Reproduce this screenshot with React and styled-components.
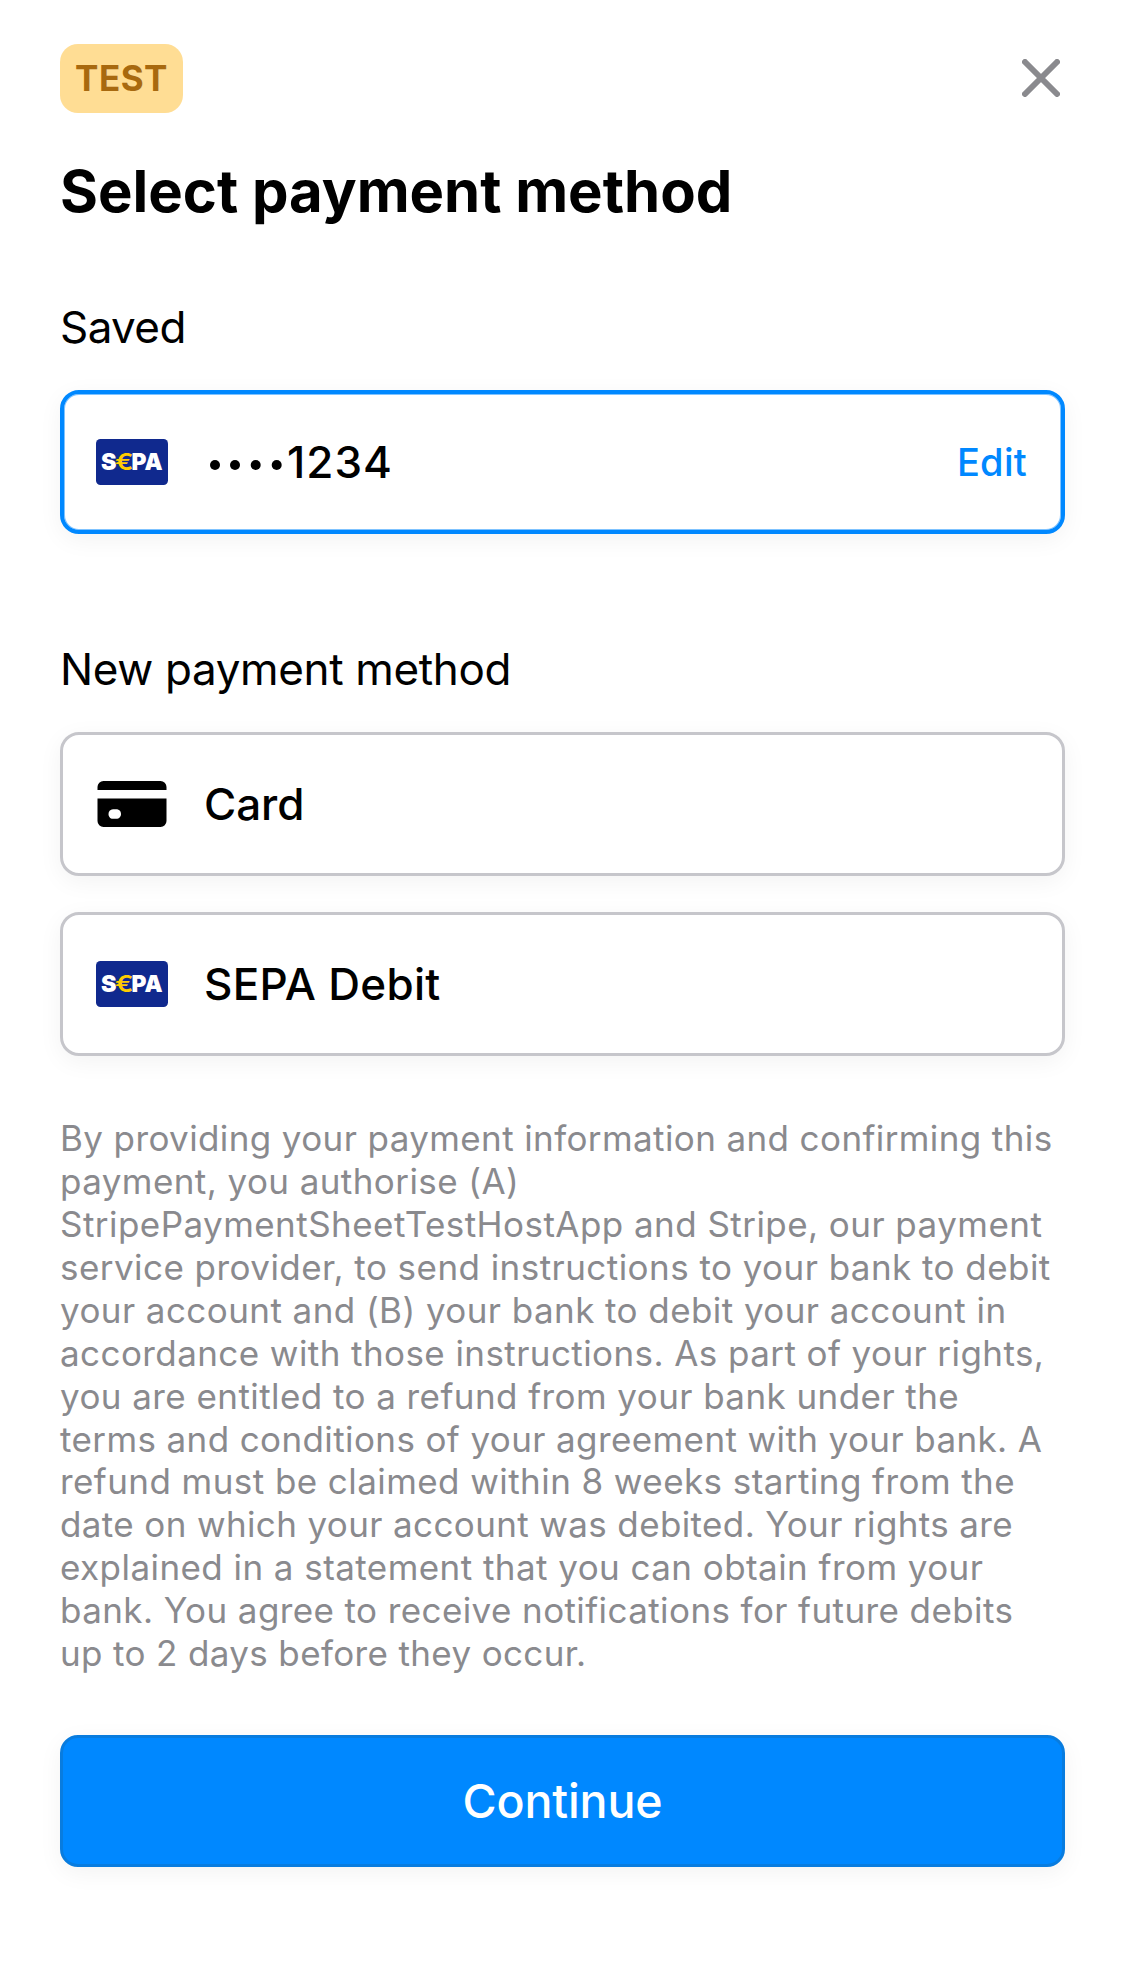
import React from "react";
import styled, { createGlobalStyle } from "styled-components";

const Global = createGlobalStyle`
  * { box-sizing: border-box; }
  body { margin: 0; background: #fff; }
`;

const Sheet = styled.main`
  width: 1125px;
  height: 1987px;
  padding: 44px 60px 0;
  display: flex;
  flex-direction: column;
  background: #fff;
  color: #000;
  font-family: Inter, "Liberation Sans", sans-serif;
  overflow: hidden;
`;

const TopBar = styled.header`
  display: flex;
  justify-content: space-between;
  align-items: center;
  height: 69px;
`;

const TestBadge = styled.span`
  display: flex;
  align-items: center;
  justify-content: center;
  width: 123px;
  height: 69px;
  padding-bottom: 1px;
  border-radius: 18px;
  background: #ffdd94;
  color: #a8690f;
  font-size: 35px;
  font-weight: 700;
  letter-spacing: 0.5px;
  line-height: 1;
`;

const CloseButton = styled.button`
  display: flex;
  margin: 0 5px 1px 0;
  padding: 0;
  border: 0;
  background: none;
`;

const Title = styled.h1`
  margin: 42px 0 0;
  height: 73px;
  font-size: 58px;
  line-height: 72px;
  font-weight: 700;
  white-space: nowrap;
`;

const SectionLabel = styled.h2`
  margin: ${(p) => p.$top}px 0 0;
  height: 54px;
  font-size: 44px;
  line-height: 54px;
  font-weight: 400;
  letter-spacing: ${(p) => p.$tracking}px;
  white-space: nowrap;
`;

const MethodRow = styled.div`
  display: flex;
  align-items: center;
  flex: none;
  height: 144px;
  margin-top: ${(p) => p.$top}px;
  padding-left: ${(p) => (p.$selected ? 32 : 33)}px;
  padding-right: 34px;
  border: ${(p) => (p.$selected ? "4px solid #0088ff" : "3px solid #c6c6cb")};
  border-radius: 19px;
  background: #fff;
  box-shadow: ${(p) => (p.$selected ? "inset 0 0 0 1px rgba(0, 136, 255, 0.5), " : "")}0 6px 24px rgba(0, 0, 0, 0.05);
`;

const MethodName = styled.span`
  display: flex;
  align-items: center;
  margin-left: 36px;
  font-size: 44px;
  line-height: 54px;
  font-weight: 500;
  letter-spacing: ${(p) => p.$tracking}px;
  white-space: nowrap;
`;

const EditButton = styled.button`
  margin-left: auto;
  padding: 0;
  border: 0;
  background: none;
  color: #0088ff;
  font-family: inherit;
  font-size: 38px;
  line-height: 48px;
  font-weight: 500;
  letter-spacing: 0.3px;
`;

const Mandate = styled.p`
  margin: 60.85px 0 0;
  color: #8a8a8e;
  font-size: 35px;
  line-height: 42.96px;
  font-weight: 400;
`;

const MandateLine = styled.span`
  display: block;
  white-space: nowrap;
  letter-spacing: ${(p) => p.$tracking}px;
`;

const ContinueButton = styled.button`
  flex: none;
  height: 132px;
  margin: 59.65px 0 0;
  padding: 0;
  border: 3px solid #087cdf;
  border-radius: 18px;
  background: #0088ff;
  box-shadow: 0 6px 24px rgba(0, 0, 0, 0.05);
  color: #fff;
  font-family: inherit;
  font-size: 46.5px;
  line-height: 58px;
  font-weight: 500;
  letter-spacing: -0.1px;
`;

const SepaLogo = () => (
  <svg width="72" height="46" viewBox="0 0 72 46">
    <rect width="72" height="46" rx="4.5" fill="#10298e" />
    <g fontFamily='Inter, "Liberation Sans", sans-serif' fontWeight="900" fontSize="23.2" fill="#fff">
      <text x="5" y="31.300" textLength="15.5" lengthAdjust="spacingAndGlyphs">S</text>
      <text x="35.500" y="31.300" textLength="31" lengthAdjust="spacingAndGlyphs">PA</text>
      <text x="19" y="31.300" textLength="18.5" lengthAdjust="spacingAndGlyphs" fill="#ffcc00" fontWeight="600">€</text>
    </g>
  </svg>
);

const CardIcon = () => (
  <svg width="72" height="46" viewBox="0 0 72 46">
    <path d="M1.5 9V6a6 6 0 0 1 6-6h57a6 6 0 0 1 6 6v3z" />
    <path
      fillRule="evenodd"
      d="M1.500 17.500H70.500V40a6 6 0 0 1-6 6h-57a6 6 0 0 1-6-6zM17 28.200h3c3.500 0 5 2.200 5 4.700s-1.500 4.800-5 4.800h-3c-3 0-4.500-2.300-4.500-4.800s1.500-4.700 4.500-4.700z"
    />
  </svg>
);

const Dots = () => (
  <svg width="83" height="54" viewBox="0 0 83 54">
    {[11, 31, 51.7, 72.7].map((x) => (
      <circle key={x} cx={x} cy="30" r="5" />
    ))}
  </svg>
);

const LINES = [
  ["By providing your payment information and confirming this", 0.39],
  ["payment, you authorise (A)", 0.42],
  ["StripePaymentSheetTestHostApp and Stripe, our payment", 0.45],
  ["service provider, to send instructions to your bank to debit", 0.45],
  ["your account and (B) your bank to debit your account in", 0.43],
  ["accordance with those instructions. As part of your rights,", 0.42],
  ["you are entitled to a refund from your bank under the", 0.43],
  ["terms and conditions of your agreement with your bank. A", 0.39],
  ["refund must be claimed within 8 weeks starting from the", 0.43],
  ["date on which your account was debited. Your rights are", 0.37],
  ["explained in a statement that you can obtain from your", 0.44],
  ["bank. You agree to receive notifications for future debits", 0.4],
  ["up to 2 days before they occur.", 0.36],
];

export default function App() {
  return (
    <Sheet>
      <Global />
      <TopBar>
        <TestBadge>TEST</TestBadge>
        <CloseButton aria-label="Close">
          <svg width="38" height="38" viewBox="0 0 38 38" fill="none" stroke="#8a8a8e" strokeWidth="6" strokeLinecap="round">
            <path d="M3 3 35 35M35 3 3 35" />
          </svg>
        </CloseButton>
      </TopBar>
      <Title>Select payment method</Title>
      <SectionLabel $top={72} $tracking={-0.6}>Saved</SectionLabel>
      <MethodRow $top={36} $selected>
        <SepaLogo />
        <MethodName $tracking={1}>
          <Dots />
          1234
        </MethodName>
        <EditButton>Edit</EditButton>
      </MethodRow>
      <SectionLabel $top={108} $tracking={-0.35}>New payment method</SectionLabel>
      <MethodRow $top={36}>
        <CardIcon />
        <MethodName $tracking={-0.1}>Card</MethodName>
      </MethodRow>
      <MethodRow $top={36}>
        <SepaLogo />
        <MethodName $tracking={0.3}>SEPA Debit</MethodName>
      </MethodRow>
      <Mandate>
        {LINES.map(([text, tracking]) => (
          <MandateLine key={text} $tracking={tracking}>{text} </MandateLine>
        ))}
      </Mandate>
      <ContinueButton>Continue</ContinueButton>
    </Sheet>
  );
}
